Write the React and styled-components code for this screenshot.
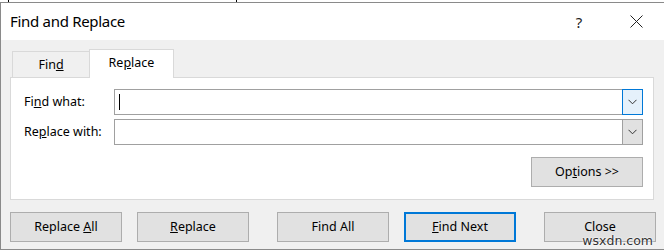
import React from 'react'
import styled, { createGlobalStyle } from 'styled-components'

const Global = createGlobalStyle`
  html, body { margin: 0; padding: 0; background: #fff; }
  body { font-family: "Noto Sans", "Open Sans", sans-serif; color: #000; }
  #root { width: 664px; height: 252px; overflow: hidden; }
`

const Mn = ({ children }) => <u>{children}</u>

const Chevron = () => (
  <svg width="9" height="6" viewBox="0 0 9 6">
    <path d="M0.5 0.8 L4.5 4.8 L8.5 0.8" fill="none" stroke="#333" strokeWidth="1" />
  </svg>
)

const CloseIcon = () => (
  <svg width="13" height="13" viewBox="0 0 13 13">
    <path d="M0.5 0.5 L12.5 12.5 M12.5 0.5 L0.5 12.5" stroke="#222" strokeWidth="1" />
  </svg>
)

const App = () => {
  return (
    <Page>
      <Global />
      <Sheet>
        <GridLine style={{ left: 8 }} />
        <GridLine style={{ left: 236 }} />
      </Sheet>
      <Dialog>
        <TitleBar>
          <Title>Find and Replace</Title>
          <Caption>?</Caption>
          <Caption $close>
            <CloseIcon />
          </Caption>
        </TitleBar>
        <Body>
          <TabStrip>
            <Tab>Fin<Mn>d</Mn></Tab>
            <Tab $active>Re<Mn>p</Mn>lace</Tab>
          </TabStrip>
          <Panel>
            <FieldGrid>
              <Label>Fi<Mn>n</Mn>d what:</Label>
              <Combo>
                <Field>
                  <Caret />
                </Field>
                <DropButton $hot>
                  <Chevron />
                </DropButton>
              </Combo>
              <Label>Re<Mn>p</Mn>lace with:</Label>
              <Combo>
                <Field />
                <DropButton>
                  <Chevron />
                </DropButton>
              </Combo>
            </FieldGrid>
            <OptionsRow>
              <Button>Op<Mn>t</Mn>ions &gt;&gt;</Button>
            </OptionsRow>
          </Panel>
          <ButtonBar>
            <Group>
              <Button>Replace <Mn>A</Mn>ll</Button>
              <Button><Mn>R</Mn>eplace</Button>
            </Group>
            <Group>
              <Button>Find All</Button>
              <Button $default><Mn>F</Mn>ind Next</Button>
            </Group>
            <Group>
              <Button>Close</Button>
            </Group>
          </ButtonBar>
          <Watermark>wsxdn.com</Watermark>
        </Body>
      </Dialog>
    </Page>
  )
}

export default App

const Page = styled.div`
  width: 664px;
  height: 252px;
  background: #fff;
  position: relative;
`

const Sheet = styled.div`
  height: 2px;
  position: relative;
`

const GridLine = styled.div`
  position: absolute;
  top: 0;
  width: 1px;
  height: 2px;
  background: #000;
`

const Dialog = styled.div`
  width: 664px;
  box-sizing: border-box;
  border-top: 1px solid #8a8a8a;
  border-left: 1px solid #8a8a8a;
  border-bottom: 1px solid #8a8a8a;
  background: #f0f0f0;
  display: flex;
  flex-direction: column;
`

const TitleBar = styled.div`
  height: 37px;
  background: #fff;
  display: flex;
  align-items: center;
  padding-left: 9px;
  padding-right: 5px;
`

const Title = styled.div`
  flex: 1;
  font-size: 15px;
  letter-spacing: -0.3px;
  padding-bottom: 1px;
`

const Caption = styled.div`
  width: ${p => (p.$close ? '46px' : '40px')};
  margin-left: ${p => (p.$close ? '14px' : '0')};
  height: 37px;
  display: flex;
  align-items: center;
  justify-content: center;
  font-size: 15px;
  color: #222;
`

const Body = styled.div`
  position: relative;
  padding: 9px 10px 7px 9px;
  display: flex;
  flex-direction: column;
`

const TabStrip = styled.div`
  height: 28px;
  display: flex;
  align-items: flex-end;
  padding-left: 2px;
`

const Tab = styled.div`
  box-sizing: border-box;
  height: ${p => (p.$active ? '29px' : '26px')};
  width: ${p => (p.$active ? '85px' : '78px')};
  margin-left: ${p => (p.$active ? '-1px' : '0')};
  margin-bottom: ${p => (p.$active ? '-1px' : '0')};
  position: relative;
  z-index: ${p => (p.$active ? 1 : 0)};
  background: ${p => (p.$active ? '#fff' : '#f0f0f0')};
  border: 1px solid #d9d9d9;
  border-bottom: none;
  text-align: center;
  line-height: ${p => (p.$active ? '26px' : '25px')};
  font-size: 12.5px;
  white-space: nowrap;
`

const Panel = styled.div`
  box-sizing: border-box;
  height: 123px;
  background: #fff;
  border: 1px solid #d9d9d9;
  padding: 11px 10px 12px 13px;
  display: flex;
  flex-direction: column;
  gap: 12px;
`

const FieldGrid = styled.div`
  display: grid;
  grid-template-columns: 90px 1fr;
  row-gap: 4px;
  align-items: center;
`

const Label = styled.div`
  font-size: 12.5px;
  padding-bottom: 1px;
  white-space: nowrap;
`

const Combo = styled.div`
  box-sizing: border-box;
  height: 26px;
  border: 1px solid #a0a0a0;
  background: #fff;
  display: flex;
`

const Field = styled.div`
  flex: 1;
  position: relative;
`

const Caret = styled.div`
  position: absolute;
  left: 4px;
  top: 4px;
  width: 1px;
  height: 16px;
  background: #000;
`

const DropButton = styled.div`
  box-sizing: border-box;
  width: 21px;
  margin: -1px -1px -1px 0;
  border: 1px solid ${p => (p.$hot ? '#0078d7' : '#a0a0a0')};
  background: ${p => (p.$hot ? '#e5f1fb' : '#e1e1e1')};
  display: flex;
  align-items: center;
  justify-content: center;
`

const OptionsRow = styled.div`
  display: flex;
  justify-content: flex-end;
`

const Button = styled.div`
  box-sizing: border-box;
  flex: none;
  width: 112px;
  height: 30px;
  background: #e1e1e1;
  border: ${p => (p.$default ? '2px solid #0078d7' : '1px solid #adadad')};
  text-align: center;
  line-height: ${p => (p.$default ? '25px' : '27px')};
  font-size: 12.5px;
  white-space: nowrap;
`

const ButtonBar = styled.div`
  margin-top: 12px;
  display: flex;
  gap: 28px;
`

const Group = styled.div`
  flex: none;
  display: flex;
  gap: 15px;
`

const Watermark = styled.div`
  position: absolute;
  right: 11px;
  bottom: 1px;
  font-family: "DejaVu Sans", Verdana, sans-serif;
  font-size: 12.5px;
  color: #333;
  text-shadow: 0 0 2px #fff, 0 0 2px #fff;
`
